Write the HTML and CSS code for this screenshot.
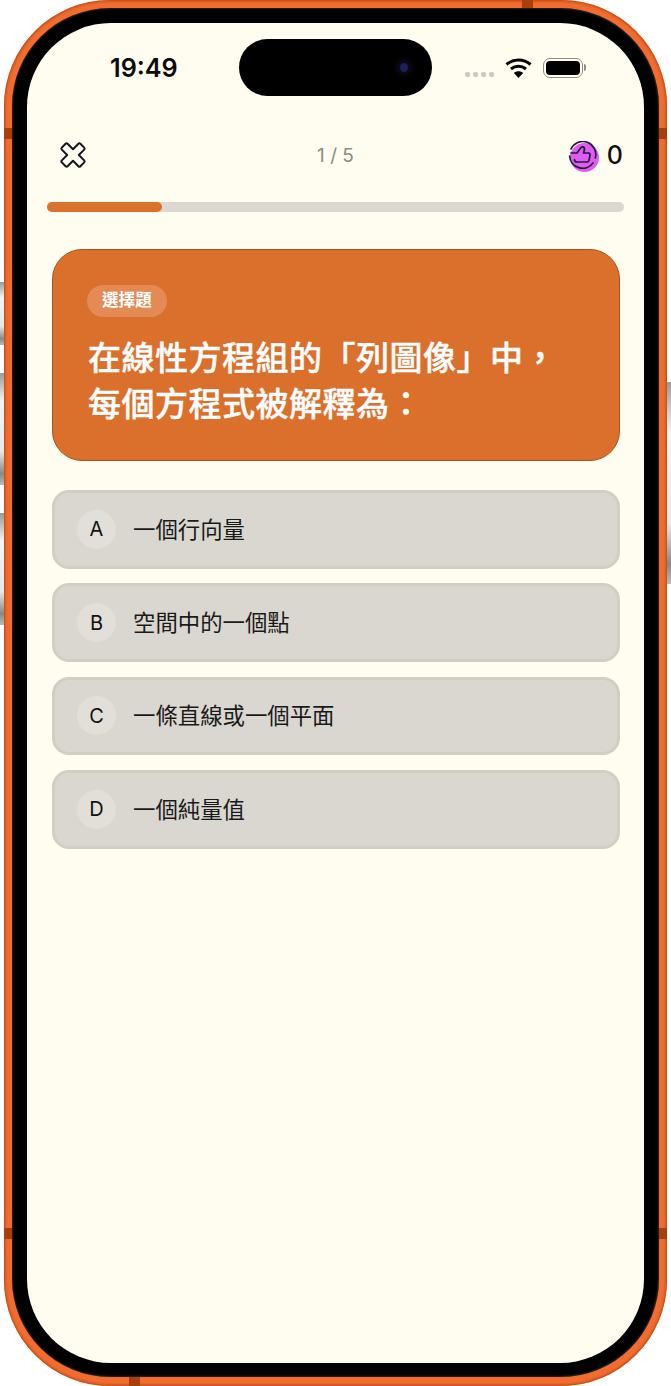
FILE: index.html
```html
<!DOCTYPE html>
<html lang="zh-Hant">
<head>
  <meta charset="UTF-8" />
  <meta name="viewport" content="width=device-width, initial-scale=1.0"/>
  <title>選擇題</title>
  <link rel="stylesheet" href="styles.css">
</head>
<body>

  <!-- Botones laterales -->
  <div class="side-btn side-btn-mute"></div>
  <div class="side-btn side-btn-up"></div>
  <div class="side-btn side-btn-down"></div>
  <div class="side-btn side-btn-power"></div>

  <div class="phone">
    <span class="band band-lt"></span>
    <span class="band band-lb"></span>
    <span class="band band-rt"></span>
    <span class="band band-rb"></span>
    <span class="band-h band-top"></span>
    <span class="band-h band-bottom"></span>

    <div class="bezel">
      <div class="screen">

        <div class="status-bar">
          <span class="time">19:49</span>
          <div class="island"><span class="camera"></span></div>
          <div class="status-icons">
            <div class="signal"><i></i><i></i><i></i><i></i></div>
            <svg class="wifi" width="27" height="20" viewBox="0 0 27 20">
              <path d="M1.5 6.5C8.5 .5 18.5 .5 25.5 6.5" fill="none" stroke="#000" stroke-width="3"/>
              <path d="M6 11C10.5 7.2 16.5 7.2 21 11" fill="none" stroke="#000" stroke-width="3"/>
              <path d="M13.5 20L8.8 15C11.5 12.6 15.5 12.6 18.2 15Z" fill="#000"/>
            </svg>
            <div class="battery"><div class="battery-fill"></div></div>
            <span class="battery-tip"></span>
          </div>
        </div>

        <div class="top-row">
          <svg class="close-icon" width="28" height="28" viewBox="0 0 28 28">
            <path d="M8.6 2.8L14 8.2L19.4 2.8Q20.4 1.8 21.4 2.8L25.2 6.6Q26.2 7.6 25.2 8.6L19.8 14L25.2 19.4Q26.2 20.4 25.2 21.4L21.4 25.2Q20.4 26.2 19.4 25.2L14 19.8L8.6 25.2Q7.6 26.2 6.6 25.2L2.8 21.4Q1.8 20.4 2.8 19.4L8.2 14L2.8 8.6Q1.8 7.6 2.8 6.6L6.6 2.8Q7.6 1.8 8.6 2.8Z" fill="none" stroke="#15151f" stroke-width="2" stroke-linejoin="round"/>
          </svg>
          <span class="counter">1 / 5</span>
          <div class="score">
            <svg class="score-icon" width="32" height="32" viewBox="0 0 32 32">
              <circle cx="16.5" cy="16.5" r="14.5" fill="#e05cf0"/>
              <path d="M3 8A13 13 0 0 1 27.3 17" fill="none" stroke="#1b1b3a" stroke-width="1.7" stroke-linecap="round"/>
              <path d="M25 22A13 13 0 0 1 1.6 15" fill="none" stroke="#1b1b3a" stroke-width="1.7" stroke-linecap="round"/>
              <path d="M3 12L9 12L12.6 7Q13.8 5.2 15.4 6Q17 7 16.2 9.6L15.6 12L20.4 12Q22.4 12.2 22 14.2L21 19.4Q20.6 21 19 21L9 21Q6.5 21 6.5 18.5" fill="#e05cf0" stroke="#1b1b3a" stroke-width="1.7" stroke-linecap="round" stroke-linejoin="round"/>
            </svg>
            <span class="score-num">0</span>
          </div>
        </div>

        <div class="progress"><div class="progress-fill" style="width: 20%"></div></div>

        <div class="question">
          <span class="badge">選擇題</span>
          <h1 class="question-title">在線性方程組的「列圖像」中，<br>每個方程式被解釋為：</h1>
        </div>

        <div class="options">
          <div class="option"><span class="letter">A</span><span class="option-text">一個行向量</span></div>
          <div class="option"><span class="letter">B</span><span class="option-text">空間中的一個點</span></div>
          <div class="option"><span class="letter">C</span><span class="option-text">一條直線或一個平面</span></div>
          <div class="option"><span class="letter">D</span><span class="option-text">一個純量值</span></div>
        </div>

      </div>
    </div>
  </div>

</body>
</html>
```

FILE: styles.css
```css
body {
  margin: 0;
  background: #fff;
  font-family: "Noto Sans", "Noto Sans CJK TC", sans-serif;
  color: #111;
  position: relative;
  width: 671px;
  height: 1386px;
  overflow: hidden;
}

/* Marco del teléfono */
.phone {
  position: relative;
  box-sizing: border-box;
  width: 663px;
  height: 1386px;
  margin-left: 4px;
  padding: 8px 8px 9px;
  border-radius: 106px;
  background: #f26c30;
  box-shadow: inset 0 0 3px 1px #b5450f;
}

.bezel {
  box-sizing: border-box;
  height: 100%;
  padding: 15px 15px 14px;
  border-radius: 98px;
  background: #000;
  box-shadow: inset 0 0 3px #555;
}

.screen {
  height: 100%;
  border-radius: 84px;
  background: #fffdf0;
  overflow: hidden;
}

.band {
  position: absolute;
  left: 0;
  width: 8px;
  height: 11px;
  background: #a83f0c;
}

.band-lt { top: 128px; }
.band-lb { top: 1228px; }
.band-rt { top: 128px; left: auto; right: 0; }
.band-rb { top: 1228px; left: auto; right: 0; }

.band-h {
  position: absolute;
  width: 11px;
  height: 8px;
  background: #a83f0c;
}

.band-top { top: 0; left: 518px; }
.band-bottom { bottom: 0; left: 125px; height: 9px; }

.side-btn {
  position: absolute;
  left: 0;
  width: 4px;
  background: linear-gradient(#999, #f4f4f4 25%, #e8e8e8 70%, #888 90%, #bbb);
}

.side-btn-mute { top: 282px; height: 63px; }
.side-btn-up { top: 373px; height: 112px; }
.side-btn-down { top: 513px; height: 112px; }
.side-btn-power { top: 382px; left: 667px; height: 202px; }

/* Barra de estado */
.status-bar {
  display: grid;
  grid-template-columns: 212px 193px 1fr;
  align-items: center;
  height: 57px;
  padding-top: 16px;
}

.time {
  padding-left: 83px;
  font-family: Inter, sans-serif;
  font-size: 25.2px;
  font-weight: 600;
  color: #0c0c0c;
}

.island {
  display: flex;
  justify-content: flex-end;
  align-items: center;
  height: 57px;
  padding-right: 24px;
  box-sizing: border-box;
  border-radius: 29px;
  background: #000;
}

.camera {
  width: 8px;
  height: 9px;
  border-radius: 50%;
  background: #1f1f5c;
  box-shadow: 0 0 5px 4px #0c0a1c;
}

.status-icons {
  display: flex;
  align-items: center;
  padding-left: 33px;
}

.signal {
  display: flex;
  gap: 3px;
  margin-top: 14px;
}

.signal i {
  width: 5px;
  height: 5px;
  border-radius: 2px;
  background: #c9c9c3;
}

.wifi {
  margin: 0 11px 0 11px;
}

.battery {
  box-sizing: border-box;
  width: 40px;
  height: 20px;
  padding: 2px;
  border: 1.5px solid #8e8c84;
  border-radius: 7px;
}

.battery-fill {
  height: 100%;
  border-radius: 4px;
  background: #000;
}

.battery-tip {
  width: 2px;
  height: 7px;
  margin-left: 1px;
  border-radius: 0 2px 2px 0;
  background: #8e8c84;
}

/* Cabecera */
.top-row {
  display: grid;
  grid-template-columns: 1fr auto 1fr;
  align-items: center;
  height: 40px;
  margin-top: 39px;
  padding: 0 21px;
}

.close-icon {
  display: block;
  margin-left: 11px;
}

.counter {
  font-family: Inter, sans-serif;
  font-size: 19px;
  color: #8b8b85;
}

.score {
  display: flex;
  justify-content: flex-end;
  align-items: center;
  gap: 7px;
}

.score-icon {
  margin-top: 3px;
}

.score-num {
  font-family: Inter, sans-serif;
  font-size: 25px;
  font-weight: 500;
  color: #111;
}

.progress {
  height: 10px;
  margin: 27px 20px 0;
  border-radius: 5px;
  background: #dad8d0;
}

.progress-fill {
  height: 100%;
  border-radius: 5px;
  background: #dc702d;
}

/* Tarjeta de la pregunta */
.question {
  box-sizing: border-box;
  height: 212px;
  margin: 37px 24px 0 25px;
  padding: 35px 34px;
  border: 1px solid #a9531f;
  border-radius: 30px;
  background: #da702c;
  color: #fff;
}

.badge {
  display: inline-block;
  padding: 0 15px;
  height: 32px;
  line-height: 30px;
  border-radius: 16px;
  background: #e38a55;
  font-size: 16.6px;
  font-weight: 700;
}

.question-title {
  margin: 18px 0 0 1px;
  font-size: 33px;
  font-weight: 500;
  line-height: 46px;
  letter-spacing: 0.5px;
  -webkit-text-stroke: 0.4px #fff;
}

/* Opciones */
.options {
  display: flex;
  flex-direction: column;
  gap: 14.67px;
  margin: 29px 24px 0 25px;
}

.option {
  box-sizing: border-box;
  display: flex;
  align-items: center;
  gap: 17px;
  height: 78.67px;
  padding-left: 22px;
  border: 3px solid #cfcfc3;
  border-radius: 17px;
  background: #d9d7cf;
}

.letter {
  display: flex;
  justify-content: center;
  align-items: center;
  width: 39px;
  height: 39px;
  border-radius: 50%;
  background: #e1dfd8;
  font-family: Inter, sans-serif;
  font-size: 20px;
}

.option-text {
  margin-top: -2px;
  font-size: 22.4px;
  color: #1a1a1a;
}
```
